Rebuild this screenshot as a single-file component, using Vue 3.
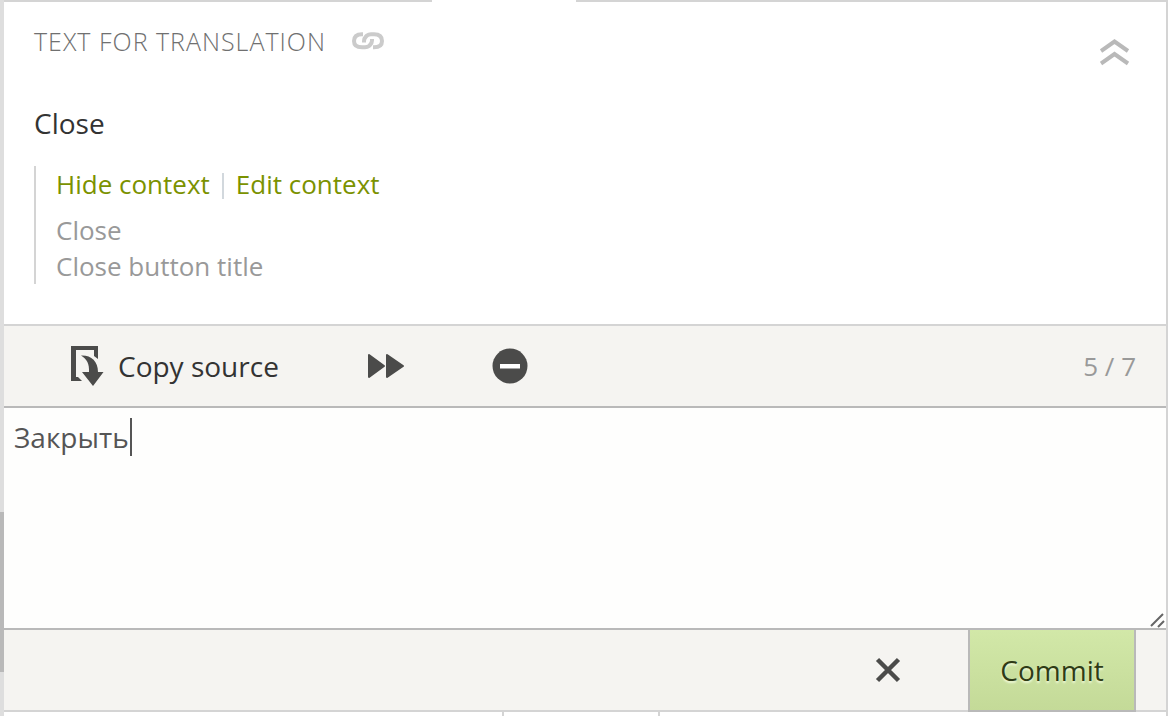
<script setup>
import { ref } from 'vue'

const translation = ref('Закрыть')
const contextLines = ['Close', 'Close button title']
</script>

<template>
  <div class="page">
    <div class="rail"><div class="thumb"></div></div>
    <main class="panel">
      <div class="tab-edge"><span class="edge-left"></span><span class="edge-right"></span></div>
      <section class="source">
        <header class="source-head">
          <h1>TEXT FOR TRANSLATION</h1>
          <a class="link" href="#" aria-label="Link to this phrase">
            <svg width="32" height="18" viewBox="0 0 32 18" fill="none" stroke="#cbcbcb" stroke-width="4">
              <path d="M12 10.500V9Q12 6.500 14 4.500L15 3.500Q16.500 2.200 19 2.200H22Q30 2.200 30 9Q30 15.300 22 15.300H21" />
              <path d="M20 7V8.500Q20 11 18 13L17 14Q15.500 15.300 13 15.300H10Q2 15.300 2 9Q2 2.200 10 2.200H11" />
            </svg>
          </a>
          <button class="collapse" type="button" aria-label="Collapse">
            <svg width="30" height="28" viewBox="0 0 30 28" fill="none" stroke="#b9b9b9" stroke-width="4">
              <path d="M1 13L14.500 3.500L28 13M1 25.500L14.500 16L28 25.500" />
            </svg>
          </button>
        </header>
        <p class="phrase">Close</p>
        <div class="context">
          <nav class="context-links">
            <a href="#">Hide context</a><span class="bar"></span><a href="#">Edit context</a>
          </nav>
          <p v-for="line in contextLines" :key="line">{{ line }}</p>
        </div>
      </section>

      <div class="toolbar">
        <button class="copy" type="button">
          <svg width="34" height="40" viewBox="0 0 34 40" fill="#4b4b4a">
            <path d="M1 0H28V13L24 10V4H6V31H8L12 35H1Z" />
            <path d="M11 9.500C21 9 28 15 28 26H33.500L23 40L12 26H19C19.500 18 17 13 11 9.500Z" />
          </svg>
          <span>Copy source</span>
        </button>
        <button class="skip" type="button" aria-label="Next phrase">
          <svg width="38" height="26" viewBox="0 0 38 26" fill="#4b4b4a" stroke="#4b4b4a" stroke-width="2" stroke-linejoin="round">
            <path d="M2 2L17 13L2 24ZM20 2L36 13L20 24Z" />
          </svg>
        </button>
        <button class="clear" type="button" aria-label="Remove translation">
          <svg width="36" height="36" viewBox="0 0 36 36">
            <circle cx="18" cy="18" r="17.500" fill="#4b4b4a" />
            <path d="M8 16H28V20.500H8Z" fill="#fff" />
          </svg>
        </button>
        <span class="count">5 / 7</span>
      </div>

      <div class="editor">
        <textarea v-model="translation" aria-label="Translation" spellcheck="false"></textarea>
        <span class="caret"></span>
        <svg class="grip" width="16" height="16" viewBox="0 0 16 16" fill="none" stroke="#666" stroke-width="2">
          <path d="M1 14L13 2M8 15L14 9" />
        </svg>
      </div>

      <footer class="actions">
        <button class="cancel" type="button" aria-label="Cancel">
          <svg width="26" height="26" viewBox="0 0 26 26" fill="none" stroke="#4b4b4a" stroke-width="4.500">
            <path d="M2.500 2.500L23.500 23.500M23.500 2.500L2.500 23.500" />
          </svg>
        </button>
        <button class="commit" type="button">Commit</button>
      </footer>
      <div class="next-row"><span></span><span></span><span></span></div>
    </main>
  </div>
</template>

<style>
body {
  background: #fff;
}
</style>

<style scoped>
* {
  box-sizing: border-box;
}
.page {
  display: flex;
  min-height: 100vh;
  padding-right: 2px;
  font-family: "Open Sans", "Noto Sans", sans-serif;
  font-size: 28px;
  line-height: 36px;
  color: #333;
}
svg {
  display: block;
}
h1,
p {
  margin: 0;
}
button {
  display: flex;
  align-items: center;
  padding: 0;
  border: 0;
  background: none;
  font: inherit;
  color: inherit;
  cursor: pointer;
}
.rail {
  display: grid;
  grid-template-rows: 512fr 160fr 44fr;
  width: 4px;
  background: #dedede;
}
.thumb {
  grid-row: 2;
  background: #b9b9b9;
}
.panel {
  flex: 1;
  min-width: 0;
  border-right: 2px solid #d4d4d4;
}
.tab-edge {
  display: flex;
  justify-content: space-between;
  height: 2px;
}
.edge-left {
  width: 428px;
  background: #d4d4d4;
}
.edge-right {
  width: 590px;
  background: #d4d4d4;
}
.source {
  padding: 20px 36px 40px 30px;
}
.source-head {
  display: flex;
  align-items: center;
  height: 38px;
}
h1 {
  font-size: 25px;
  font-weight: 300;
  letter-spacing: 1px;
  color: #707070;
}
.link {
  margin-left: 26px;
}
.collapse {
  align-self: flex-end;
  margin: 0 0 -6px auto;
}
.phrase {
  margin-top: 45px;
}
.context {
  margin-top: 25px;
  padding-left: 20px;
  border-left: 2px solid #d4d4d4;
  font-size: 26px;
  color: #999;
}
.context-links {
  display: flex;
  align-items: center;
  margin-bottom: 10px;
}
.context-links a {
  color: #7b9200;
  text-decoration: none;
}
.bar {
  width: 2px;
  height: 26px;
  margin: 4px 12px 0;
  background: #d2d8dd;
}
.toolbar {
  display: flex;
  align-items: center;
  height: 84px;
  padding: 0 30px 0 66px;
  border-top: 2px solid #d4d4d4;
  border-bottom: 2px solid #b9b9b9;
  background: #f5f4f1;
}
.copy {
  gap: 14px;
}
.skip {
  margin-left: 88px;
}
.clear {
  margin-left: 87px;
}
.count {
  margin-left: auto;
  font-size: 26px;
  color: #999;
}
.editor {
  position: relative;
}
textarea {
  display: block;
  width: 100%;
  height: 220px;
  padding: 11px 10px;
  border: 0;
  outline: 0;
  background: #fefefd;
  resize: none;
  font: inherit;
  color: #555;
}
.caret {
  position: absolute;
  top: 10px;
  left: 126px;
  width: 2px;
  height: 38px;
  background: #555;
}
.grip {
  position: absolute;
  right: 0;
  bottom: 0;
}
.actions {
  display: flex;
  justify-content: flex-end;
  height: 84px;
  padding-right: 30px;
  border-top: 2px solid #b9b9b9;
  border-bottom: 2px solid #d4d4d4;
  background: #f5f4f1;
}
.cancel {
  margin-right: 67px;
}
.commit {
  justify-content: center;
  width: 168px;
  height: 82px;
  border: 2px solid #b9b9b9;
  border-top: 0;
  background: linear-gradient(#d2e8a8, #c4da98);
  color: #2e3b16;
  text-shadow: 0 2px 2px #eef8d8;
}
.next-row {
  display: grid;
  grid-template-columns: 500fr 156fr 506fr;
  height: 4px;
}
.next-row span {
  border-right: 2px solid #d4d4d4;
}
.next-row span:last-child {
  border-right: 0;
}
</style>
